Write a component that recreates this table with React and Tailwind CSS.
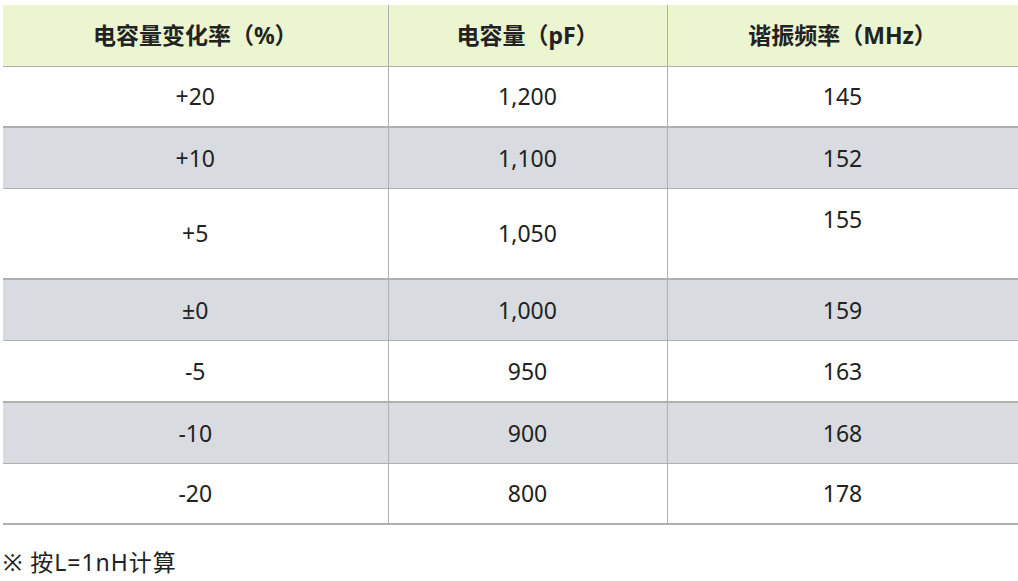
import React from "react";

const rows = [
  { a: "+20", b: "1,200", c: "145", gray: false, h: "h-[61px]" },
  { a: "+10", b: "1,100", c: "152", gray: true, h: "h-[61px]" },
  { a: "+5", b: "1,050", c: "155", gray: false, h: "h-[91px]", tall: true },
  { a: "±0", b: "1,000", c: "159", gray: true, h: "h-[61px]" },
  { a: "-5", b: "950", c: "163", gray: false, h: "h-[62px]" },
  { a: "-10", b: "900", c: "168", gray: true, h: "h-[61px]" },
  { a: "-20", b: "800", c: "178", gray: false, h: "h-[61px]" },
];

function App() {
  return (
    <div
      className="min-h-screen bg-white pt-[5px] pl-[3px] text-[#222]"
      style={{ fontFamily: '"Noto Sans", "Noto Sans CJK SC", sans-serif' }}
    >
      <table className="w-[1015px] border-collapse table-fixed text-[23px]">
        <colgroup>
          <col className="w-[385px]" />
          <col className="w-[279px]" />
          <col className="w-[351px]" />
        </colgroup>
        <thead>
          <tr className="h-[61px] bg-[#ebf6d0] border-b border-[#b0b0b0]">
            <th className="font-bold text-center border-r border-[#b0b0b0]">电容量变化率（%）</th>
            <th className="font-bold text-center border-r border-[#b0b0b0]">电容量（pF）</th>
            <th className="font-bold text-center border-r border-[#b0b0b0]">谐振频率（MHz）</th>
          </tr>
        </thead>
        <tbody>
          {rows.map((r, i) => (
            <tr
              key={i}
              className={
                r.h +
                " " +
                (r.gray
                  ? "bg-[#d8dce0] border-b border-[#b0b0b0]"
                  : "bg-white border-b-2 border-[#b0b0b0]")
              }
            >
              <td className="text-center align-middle border-r border-[#b0b0b0]">{r.a}</td>
              <td className="text-center align-middle border-r border-[#b0b0b0]">{r.b}</td>
              <td
                className={
                  "text-center border-r border-[#b0b0b0] " +
                  (r.tall ? "align-top pt-[13px]" : "align-middle")
                }
              >
                {r.c}
              </td>
            </tr>
          ))}
        </tbody>
      </table>
      <div className="mt-[22px] text-[23px] leading-[30px] tracking-[1px]">※ 按L=1nH计算</div>
    </div>
  );
}

export default App;
